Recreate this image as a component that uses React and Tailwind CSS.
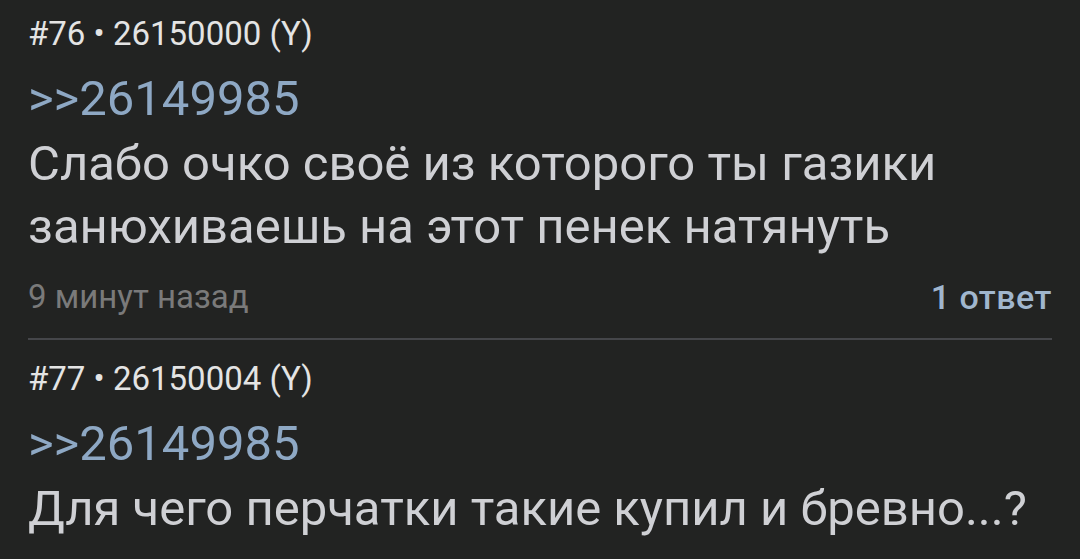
export default function App() {
  const font = { fontFamily: "Roboto, 'Noto Sans', sans-serif" };
  return (
    <div className="w-[1080px] h-[559px] overflow-hidden bg-[#222322] px-[28px]" style={font}>
      <div className="pt-[14px]">
        <div className="text-[33px] leading-[40px] text-[#e4e4e4]">#76 • 26150000 (Y)</div>
        <div className="mt-[13px] text-[49px] leading-[63px] text-[#8ea8c4]">&gt;&gt;26149985</div>
        <div className="mt-[2px] text-[49px] leading-[63px] text-[#cfd0d4]">
          Слабо очко своё из которого ты газики занюхиваешь на этот пенек натянуть
        </div>
        <div className="mt-[19px] flex items-center justify-between leading-[40px]">
          <span className="text-[33px] text-[#7a7a7a]">9 минут назад</span>
          <span className="text-[34px] font-medium tracking-[0.5px] text-[#a0b6ce]">1 ответ</span>
        </div>
      </div>
      <div className="mt-[21px] h-[2px] bg-[#45464a]" />
      <div className="pt-[19px]">
        <div className="text-[33px] leading-[40px] text-[#e4e4e4]">#77 • 26150004 (Y)</div>
        <div className="mt-[13px] text-[49px] leading-[63px] text-[#8ea8c4]">&gt;&gt;26149985</div>
        <div className="mt-[2px] text-[49px] leading-[63px] text-[#cfd0d4]">
          Для чего перчатки такие купил и бревно...?
        </div>
      </div>
    </div>
  );
}
